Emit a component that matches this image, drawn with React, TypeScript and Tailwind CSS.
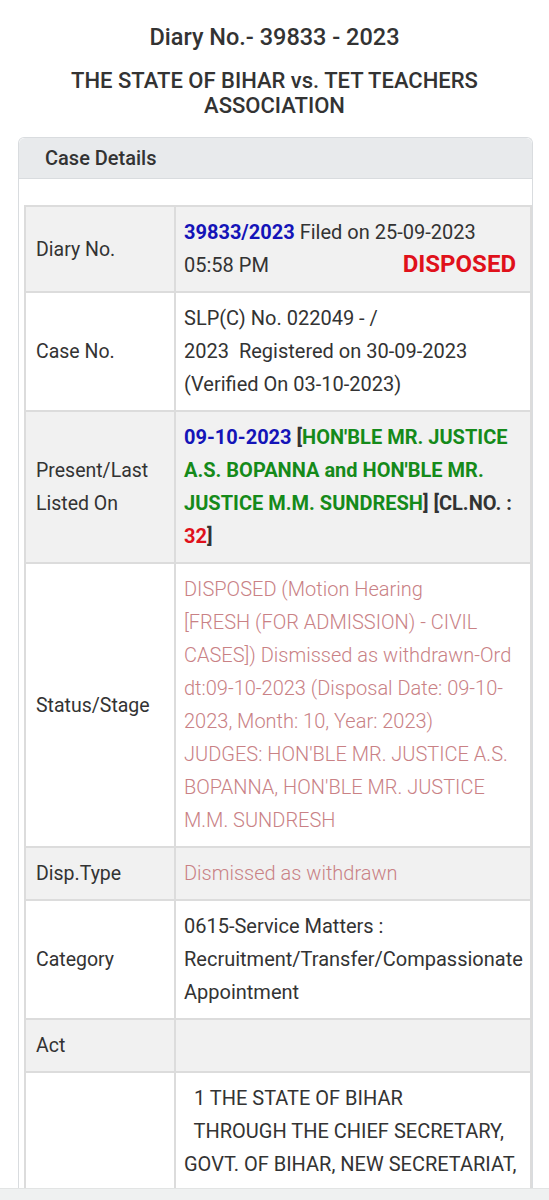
const statusLines = [
    'DISPOSED (Motion Hearing',
    '[FRESH (FOR ADMISSION) - CIVIL',
    'CASES]) Dismissed as withdrawn-Ord',
    'dt:09-10-2023 (Disposal Date: 09-10-',
    '2023, Month: 10, Year: 2023)',
    "JUDGES: HON'BLE MR. JUSTICE A.S.",
    "BOPANNA, HON'BLE MR. JUSTICE",
    'M.M. SUNDRESH',
];

const rows: { label: string; gray: boolean; value: React.ReactNode }[] = [
    {
        label: 'Diary No.',
        gray: true,
        value: (
            <>
                <span className="font-bold text-[#1414b8]">39833/2023</span> Filed on 25-09-2023
                <br />
                <span className="inline-flex w-full items-baseline justify-between">
                    <span>05:58 PM</span>
                    <span className="pr-[10px] text-[24px] leading-[30px] font-bold text-[#e0111b]">DISPOSED</span>
                </span>
            </>
        ),
    },
    {
        label: 'Case No.',
        gray: false,
        value: (
            <>
                SLP(C) No. 022049 - /<br />
                2023&nbsp; Registered on 30-09-2023
                <br />
                (Verified On 03-10-2023)
            </>
        ),
    },
    {
        label: 'Present/Last Listed On',
        gray: true,
        value: (
            <span className="font-bold">
                <span className="text-[#1414b8]">09-10-2023</span> [
                <span className="text-[#158a1a]">HON'BLE MR. JUSTICE A.S. BOPANNA and HON'BLE MR. JUSTICE M.M. SUNDRESH</span>] [CL.NO. :{' '}
                <span className="text-[#e0111b]">32</span>]
            </span>
        ),
    },
    {
        label: 'Status/Stage',
        gray: false,
        value: (
            <span className="font-light text-[#c98185]">
                {statusLines.map((l, i) => (
                    <span key={i} className="block whitespace-nowrap">
                        {l}
                    </span>
                ))}
            </span>
        ),
    },
    {
        label: 'Disp.Type',
        gray: true,
        value: <span className="font-light text-[#c98185]">Dismissed as withdrawn</span>,
    },
    {
        label: 'Category',
        gray: false,
        value: <>0615-Service Matters : Recruitment/Transfer/Compassionate Appointment</>,
    },
    { label: 'Act', gray: true, value: null },
    {
        label: '',
        gray: false,
        value: (
            <>
                &nbsp; 1 THE STATE OF BIHAR
                <br />
                &nbsp; THROUGH THE CHIEF SECRETARY, GOVT. OF BIHAR, NEW SECRETARIAT, PATNA, BIHAR
            </>
        ),
    },
];

export default function App() {
    return (
        <div className="flex h-[1200px] flex-col overflow-hidden bg-white font-['Roboto',sans-serif] text-[#333]">
            <div className="min-h-0 flex-1 overflow-hidden">
                {/* Heading */}
                <h1 className="mt-[22px] text-center text-[23.5px] font-medium leading-[30px]">Diary No.- 39833 - 2023</h1>
                <h2 className="mx-auto mt-[16px] w-[460px] text-center text-[22px] font-medium leading-[25px]">
                    THE STATE OF BIHAR vs. TET TEACHERS ASSOCIATION
                </h2>

                {/* Card */}
                <div className="mt-[19px] mr-[16px] ml-[18px] rounded-t-[6px] border border-b-0 border-[#d9dcdf]">
                    <div className="rounded-t-[6px] border-b border-[#d9dcdf] bg-[#e8eaec] py-[8px] pl-[26px] text-[20px] font-medium leading-[24px]">
                        Case Details
                    </div>
                    <div className="pt-[26px] pr-0 pl-[5px]">
                        <table className="w-full border-collapse border-2 border-[#dcdcdc] leading-[33px]">
                            <tbody>
                                {rows.map((r, i) => (
                                    <tr key={i} className={r.gray ? 'bg-[#f1f1f1]' : 'bg-white'}>
                                        <td className="w-[150px] border-2 border-[#dcdcdc] py-[9px] pr-2 pl-[10px] align-middle text-[19.5px]">
                                            {r.label}
                                        </td>
                                        <td className="border-2 border-[#dcdcdc] py-[9px] pr-[4px] pl-[8px] align-middle text-[20px]">
                                            {r.value}
                                        </td>
                                    </tr>
                                ))}
                            </tbody>
                        </table>
                    </div>
                </div>
            </div>
            <div className="h-[12px] shrink-0 border-t border-[#e2e4e4] bg-[#eff1f1]" />
        </div>
    );
}
